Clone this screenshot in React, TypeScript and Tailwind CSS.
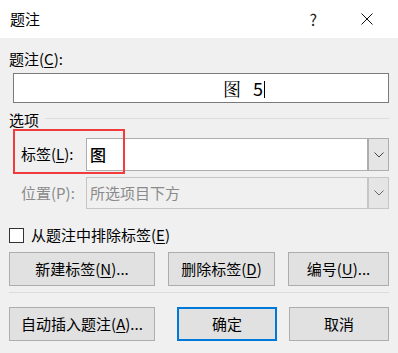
import { ReactNode } from "react";

const font = { fontFamily: '"Noto Sans CJK SC", "Noto Sans", sans-serif' };

function U({ children }: { children: ReactNode }) {
    return <span className="underline underline-offset-2 decoration-1">{children}</span>;
}

function Btn({ children, w, focused }: { children: ReactNode; w: string; focused?: boolean }) {
    return (
        <div
            className={`${w} h-[34px] flex items-center justify-center bg-[#e1e1e1] text-[15px] text-black ${
                focused ? "border-2 border-[#0078d7]" : "border border-[#adadad]"
            }`}
        >
            {children}
        </div>
    );
}

function Chevron({ color }: { color: string }) {
    return (
        <svg width="10" height="6" viewBox="0 0 10 6">
            <path d="M0.5 0.5 L5 5 L9.5 0.5" fill="none" stroke={color} strokeWidth="1" />
        </svg>
    );
}

export default function App() {
    return (
        <div className="w-[398px] h-[353px] bg-[#f0f0f0] overflow-hidden text-black" style={font}>
            {/* title bar */}
            <div className="h-[38px] bg-white flex items-center relative">
                <span className="pl-[10px] text-[15px]">题注</span>
                <span className="ml-auto mr-[44px] text-[16px] text-[#222]">?</span>
                <svg className="mr-[25px]" width="12" height="12" viewBox="0 0 12 12">
                    <path d="M0.5 0.5 L11.5 11.5 M11.5 0.5 L0.5 11.5" stroke="#111" strokeWidth="1" />
                </svg>
            </div>

            <div className="pl-[9px] pr-[9px]">
                <div className="pt-[10px] h-[35px] text-[15px] leading-[22px]">
                    题注(<U>C</U>):
                </div>
                <div className="ml-[4px] h-[30px] bg-white border border-[#7a7a7a] flex items-center">
                    <span className="pl-[209px] text-[18px] leading-none" style={{ fontFamily: '"Noto Serif CJK SC", "Noto Sans CJK SC", serif' }}>
                        图
                    </span>
                    <span className="pl-[12px] text-[18px] leading-none">5</span>
                    <span className="w-px h-[17px] bg-black ml-[1px] mt-[2px]" />
                </div>

                <div className="mt-[6px] flex items-center h-[22px]">
                    <span className="text-[15px]">选项</span>
                    <div className="flex-1 ml-[6px] mb-[4px] h-px bg-[#dcdcdc]" />
                </div>

                <div className="relative mt-[7px]">
                    <div className="flex items-center">
                        <span className="w-[77px] pl-[12px] text-[15px]">
                            标签(<U>L</U>):
                        </span>
                        <div className="flex-1 h-[33px] bg-white border border-[#adadad] flex">
                            <span className="pl-[3px] text-[16px] leading-[31px] font-medium">图</span>
                            <div className="ml-auto w-[21px] bg-[#e5e5e5] border-l-2 border-[#adadad] flex items-center justify-center">
                                <Chevron color="#444" />
                            </div>
                        </div>
                    </div>
                    <div className="absolute left-[4px] top-[-9px] w-[112px] h-[45px] border-2 border-[#f03c3c]" />
                </div>

                <div className="mt-[6px] flex items-center">
                    <span className="w-[77px] pl-[12px] text-[15px] text-[#8a8a8a]">位置(P):</span>
                    <div className="flex-1 h-[32px] bg-[#f0f0f0] border border-[#c6c6c6] flex">
                        <span className="pl-[3px] text-[15px] leading-[30px] text-[#8a8a8a]">所选项目下方</span>
                        <div className="ml-auto w-[21px] bg-[#e5e5e5] border-l-2 border-[#c6c6c6] flex items-center justify-center">
                            <Chevron color="#666" />
                        </div>
                    </div>
                </div>

                <div className="mt-[18px] flex items-center h-[16px]">
                    <div className="w-[15px] h-[15px] bg-white border border-[#333]" />
                    <span className="ml-[7px] text-[15px]">
                        从题注中排除标签(<U>E</U>)
                    </span>
                </div>

                <div className="mt-[9px] flex">
                    <Btn w="w-[146px]">
                        新建标签(<U>N</U>)...
                    </Btn>
                    <div className="ml-[13px]">
                        <Btn w="w-[107px]">
                            删除标签(<U>D</U>)
                        </Btn>
                    </div>
                    <div className="ml-auto">
                        <Btn w="w-[101px]">
                            编号(<U>U</U>)...
                        </Btn>
                    </div>
                </div>

                <div className="mt-[6px] h-px bg-[#dcdcdc]" />

                <div className="mt-[14px] flex">
                    <Btn w="w-[146px]">
                        自动插入题注(<U>A</U>)...
                    </Btn>
                    <div className="ml-[22px]">
                        <Btn w="w-[100px]" focused>
                            确定
                        </Btn>
                    </div>
                    <div className="ml-auto">
                        <Btn w="w-[100px]">取消</Btn>
                    </div>
                </div>
            </div>
        </div>
    );
}
